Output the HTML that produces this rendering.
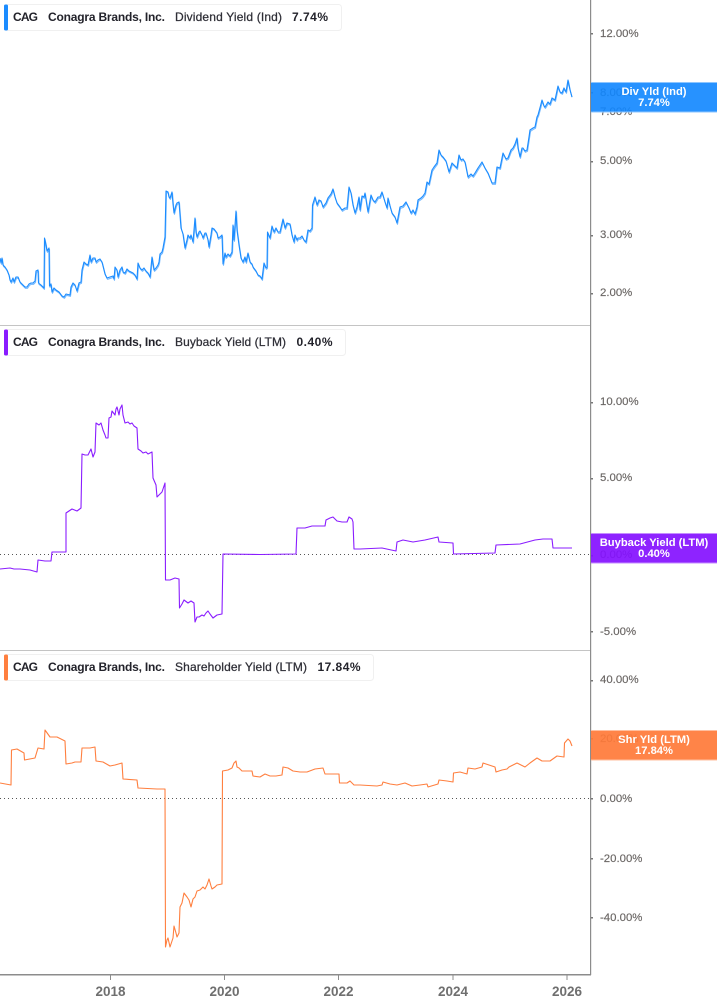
<!DOCTYPE html>
<html lang="en">
<head>
<meta charset="utf-8">
<title>CAG Yield Charts</title>
<style>
html,body{margin:0;padding:0;background:#fff;width:717px;height:1005px;overflow:hidden}
svg{display:block;position:absolute;left:0;top:0}
text{font-family:"Liberation Sans",sans-serif}
.t{font-size:11.4px;fill:#6a6664;stroke:#6a6664;stroke-width:.15}
.x{font-size:13.5px;font-weight:700;fill:#6f6f6f;text-anchor:middle}
.b{font-size:12px;font-weight:700;fill:#23232b}
.r{font-size:12px;fill:#2f2f37;stroke:#2f2f37;stroke-width:.25}
.w{font-size:11.2px;font-weight:700;fill:#fff;text-anchor:middle}
.l{fill:none;stroke-width:1.1;stroke-linejoin:round}
</style>
</head>
<body>
<svg width="717" height="1005" viewBox="0 0 717 1005" xmlns="http://www.w3.org/2000/svg">
<rect width="717" height="1005" fill="#fff"/>

<rect x="0" y="325" width="590" height="1" fill="#c4c4c4"/>
<rect x="0" y="650" width="590" height="1" fill="#c4c4c4"/>
<rect x="590" y="0" width="1.2" height="975" fill="#8c8c8c"/>
<rect x="0" y="974" width="591" height="1.5" fill="#8c8c8c"/>

<line x1="0" x2="590" y1="554.5" y2="554.5" stroke="#555" stroke-width="1" stroke-dasharray="1 3"/>
<line x1="0" x2="590" y1="798.5" y2="798.5" stroke="#555" stroke-width="1" stroke-dasharray="1 3"/>

<!-- chart 1 -->
<polyline class="l" stroke="#1b8cff" stroke-opacity=".6" transform="translate(.5 1.3)" points="0,258 1,263 2,258 3,265 5,267 7,270 9,275 10,280 11,282 13,278 14,282 16,277 18,277 20,282 22,284 25,287 27,287 29,284 31,283 33,283 35,281 36,271 38,270 38.5,283 41,285 43,287 44,288 44.5,238 46,245 47,251 49,248 49.5,286 51,284 52,292 54,288 56,290 59,292 62,296 64,297 66,294 70,295 71,287 73,283 75,285 77,291 79,283 81,282 82,270 84,262 86,264 88,265 90,255 91,262 93,258 95,258 96,262 98,260 100,259 102,262 104,270 105,274 107,278 110,277 113,276 114,279 115,267 117,270 118,277 120,270 122,267 123,272 125,273 127,269 129,271 131,272 133,273 135,275 137,279 138,263 140,268 142,270 144,268 146,271 148,273 150,277 152,257 154,270 156,268 158,265 159,262 160,254 162,252 163,248 165,237 166,191 168,192 169,197 170,198 172,192 173,204 174,213 176,205 177,203 179,202 181,228 183,234 185,248 187,240 188,235 190,238 191,235 193,242 195,218 196,232 197,237 199,232 200,231 202,235 203,238 205,233 206,233 208,240 209,247 211,235 212,228 214,229 217,233 218,238 220,237 222,235 223,264 225,253 226,257 228,254 230,256 232,252 233,225 234,240 236,211 237,230 239,245 241,258 243,262 245,257 246,262 248,253 250,262 252,264 253,267 256,271 258,275 260,276 262,279 264,263 266,268 267,267 267.5,232 270,238 272,226 274,232 276,228 278,232 280,232 283,219 285,228 287,223 290,224 292,235 294,242 295,235 297,240 298,238 300,238 302,236 304,240 306,242 308,230 310,231 312,228 312.5,205 315,197 317,205 319,200 321,201 323,207 326,203 328,198 331,194 333,189 335,197 337,203 340,207 342,210 345,208 347,208 349,187 351,193 353,205 355,213 357,207 359,197 360,210 362,196 364,197 365,193 367,206 368,212 371,195 373,200 375,202 378,197 380,197 382,192 385,202 387,208 388,198 390,206 392,213 395,217 397,223 400,207 403,206 406,202 409,208 411,213 413,210 415,214 417,207 418,200 421,198 423,196 425,193 427,182 429,184 432,170 434,167 437,163 439,150 441,155 443,157 446,161 449,172 452,163 454,165 457,168 459,155 461,160 463,159 465,162 468,177 471,174 473,176 475,173 478,168 480,165 482,162 485,168 488,173 492,183 495,183 497,167 500,168 503,153 506,159 508,158 511,150 513,148 515,144 517,138 518,148 520,157 522,148 523,148 525,151 527,150 529,137 530,130 533,128 535,127 537,117 538,115 541,104 542,100 544,106 545,107 548,102 550,104 552,98 555,100 558,86 560,92 562,93 564,88 566,92 568,80 570,90 571.5,96"/>
<polyline class="l" stroke="#1b8cff" points="0,258 1,263 2,258 3,265 5,267 7,270 9,275 10,280 11,282 13,278 14,282 16,277 18,277 20,282 22,284 25,287 27,287 29,284 31,283 33,283 35,281 36,271 38,270 38.5,283 41,285 43,287 44,288 44.5,238 46,245 47,251 49,248 49.5,286 51,284 52,292 54,288 56,290 59,292 62,296 64,297 66,294 70,295 71,287 73,283 75,285 77,291 79,283 81,282 82,270 84,262 86,264 88,265 90,255 91,262 93,258 95,258 96,262 98,260 100,259 102,262 104,270 105,274 107,278 110,277 113,276 114,279 115,267 117,270 118,277 120,270 122,267 123,272 125,273 127,269 129,271 131,272 133,273 135,275 137,279 138,263 140,268 142,270 144,268 146,271 148,273 150,277 152,257 154,270 156,268 158,265 159,262 160,254 162,252 163,248 165,237 166,191 168,192 169,197 170,198 172,192 173,204 174,213 176,205 177,203 179,202 181,228 183,234 185,248 187,240 188,235 190,238 191,235 193,242 195,218 196,232 197,237 199,232 200,231 202,235 203,238 205,233 206,233 208,240 209,247 211,235 212,228 214,229 217,233 218,238 220,237 222,235 223,264 225,253 226,257 228,254 230,256 232,252 233,225 234,240 236,211 237,230 239,245 241,258 243,262 245,257 246,262 248,253 250,262 252,264 253,267 256,271 258,275 260,276 262,279 264,263 266,268 267,267 267.5,232 270,238 272,226 274,232 276,228 278,232 280,232 283,219 285,228 287,223 290,224 292,235 294,242 295,235 297,240 298,238 300,238 302,236 304,240 306,242 308,230 310,231 312,228 312.5,205 315,197 317,205 319,200 321,201 323,207 326,203 328,198 331,194 333,189 335,197 337,203 340,207 342,210 345,208 347,208 349,187 351,193 353,205 355,213 357,207 359,197 360,210 362,196 364,197 365,193 367,206 368,212 371,195 373,200 375,202 378,197 380,197 382,192 385,202 387,208 388,198 390,206 392,213 395,217 397,223 400,207 403,206 406,202 409,208 411,213 413,210 415,214 417,207 418,200 421,198 423,196 425,193 427,182 429,184 432,170 434,167 437,163 439,150 441,155 443,157 446,161 449,172 452,163 454,165 457,168 459,155 461,160 463,159 465,162 468,177 471,174 473,176 475,173 478,168 480,165 482,162 485,168 488,173 492,183 495,183 497,167 500,168 503,153 506,159 508,158 511,150 513,148 515,144 517,138 518,148 520,157 522,148 523,148 525,151 527,150 529,137 530,130 533,128 535,127 537,117 538,115 541,104 542,100 544,106 545,107 548,102 550,104 552,98 555,100 558,86 560,92 562,93 564,88 566,92 568,80 570,90 572,97"/>

<!-- chart 2 -->
<polyline class="l" stroke="#8a1cff" points="0,569 10,568 14,569 20,569 30,570 37,572 38,560 45,561 51,561 52,552 66,552 66,513 72,509 77,511 81,508 82,454 85,455 88,455 90,451 91,449 93,457 95,452 96,423 99,425 101,423 103,430 105,435 106,438 108,438 109,418 111,417 112,411 115,415 116,409 117,407 119,415 120,409 122,405 123,415 125,423 128,422 130,424 132,423 134,426 137,428 138,449 141,451 143,453 146,452 148,454 152,452 153,478 156,485 157,497 160,494 162,492 165,483 165.5,580 170,580 175,578 179,579 179.5,608 182,604 184,600 188,603 191,601 194,603 195,622 197,617 199,617 202,615 204,616 206,613 208,611 210,614 213,618 217,615 222,614 223,554 260,554.5 296,554 297,528 305,528 312,526 325,526 326,520 330,518 333,517 337,521 342,522 347,522 349,517 352,519 353,522 354,549 360,549 382,548 396,551 397,542 403,540 413,542 425,540 438,537 439,542 453,543 453.5,554 495,553 496,545 520,544 535,540 543,539 552,539 553,548 572,548"/>

<!-- chart 3 -->
<polyline class="l" stroke="#ff7f3f" stroke-width="1" points="0,783 11,785 11.5,750 17,749 24,753 24.5,760 35,758 38,748 44,749 45,730 50,737 57,737 65,741 66,764 72,763 75,762 81,762 82,748 90,748 95,747 96,761 103,762 110,766 115,765 122,763 123,779 137,780 138,788 157,789 165,789 165.5,947 167,940 168,938 170,947 172,941 173,938 174,926 176,933 177,937 179,933 180,907 182,903 184,893 187,897 189,900 191,907 193,899 195,897 197,891 200,890 203,887 205,889 207,885 209,879 211,886 212,889 215,887 217,885 222,884 222.5,771 228,770 232,768 234,763 236,761 237,767 239,768 242,771 248,771 252,771 253,776 260,777 265,774 270,776 276,776 282,775 283,767 288,768 293,771 300,772 307,772 315,769 323,768 325,774 332,774 339,774 339.5,783 347,783 350,781 354,785 360,785 377,786 382,785 383,782 390,784 397,785 405,783 412,786 420,785 427,784 428,787 438,784 439,780 447,781 453,782 453.5,773 460,772 467,774 468,768 475,769 482,767 483,763 489,765 495,767 496,772 502,770 507,769 509,767 517,763 521,765 525,767 530,763 537,758 542,761 550,761 557,756 564,757 564.5,743 568,739 570,741 572,746"/>

<g fill="#777">
<rect x="591" y="33" width="2" height="1.5"/><rect x="591" y="92" width="2" height="1.5"/><rect x="591" y="111" width="2" height="1.5"/><rect x="591" y="161" width="2" height="1.5"/><rect x="591" y="235" width="2" height="1.5"/><rect x="591" y="293" width="2" height="1.5"/>
<rect x="591" y="402" width="2" height="1.5"/><rect x="591" y="478" width="2" height="1.5"/><rect x="591" y="555" width="2" height="1.5"/><rect x="591" y="631" width="2" height="1.5"/>
<rect x="591" y="680" width="2" height="1.5"/><rect x="591" y="738" width="2" height="1.5"/><rect x="591" y="798" width="2" height="1.5"/><rect x="591" y="858" width="2" height="1.5"/><rect x="591" y="917" width="2" height="1.5"/>
</g>

<text class="t" x="600" y="37">12.00%</text>
<text class="t" x="600" y="96">8.00%</text>
<text class="t" x="600" y="115">7.00%</text>
<text class="t" x="600" y="164">5.00%</text>
<text class="t" x="600" y="238">3.00%</text>
<text class="t" x="600" y="296">2.00%</text>
<text class="t" x="600" y="405">10.00%</text>
<text class="t" x="600" y="481">5.00%</text>
<text class="t" x="600" y="558">0.00%</text>
<text class="t" x="600" y="635">-5.00%</text>
<text class="t" x="600" y="683">40.00%</text>
<text class="t" x="600" y="742">20.00%</text>
<text class="t" x="600" y="802">0.00%</text>
<text class="t" x="600" y="862">-20.00%</text>
<text class="t" x="600" y="921">-40.00%</text>

<rect x="591" y="82" width="126" height="30" fill="#0f86ff" fill-opacity=".9"/>
<rect x="591" y="82" width="126" height="1" fill="#8cc5ff"/>
<rect x="591" y="111.5" width="126" height="1" fill="#8cc5ff"/>
<text class="w" x="654" y="95">Div Yld (Ind)</text>
<text class="w" x="654" y="106">7.74%</text>

<rect x="591" y="533" width="126" height="30" fill="#8410ff" fill-opacity=".92"/>
<rect x="591" y="533" width="126" height="1" fill="#c48dff"/>
<rect x="591" y="562.5" width="126" height="1" fill="#c48dff"/>
<text class="w" x="654" y="546">Buyback Yield (LTM)</text>
<text class="w" x="654" y="557">0.40%</text>

<rect x="591" y="730" width="126" height="30" fill="#ff7a38" fill-opacity=".92"/>
<rect x="591" y="730" width="126" height="1" fill="#ffbf9f"/>
<rect x="591" y="759.5" width="126" height="1" fill="#ffbf9f"/>
<text class="w" x="654" y="743">Shr Yld (LTM)</text>
<text class="w" x="654" y="754">17.84%</text>

<g fill="#8c8c8c">
<rect x="110" y="975" width="1" height="5"/><rect x="224" y="975" width="1" height="5"/><rect x="338" y="975" width="1" height="5"/><rect x="452.5" y="975" width="1" height="5"/><rect x="566.5" y="975" width="1" height="5"/>
</g>
<text class="x" x="110.5" y="996">2018</text>
<text class="x" x="224.5" y="996">2020</text>
<text class="x" x="338.5" y="996">2022</text>
<text class="x" x="453" y="996">2024</text>
<text class="x" x="567" y="996">2026</text>

<rect x="4.5" y="4.5" width="337" height="26" rx="3" fill="#fff" stroke="#f0f0f0"/>
<rect x="4" y="4.5" width="4" height="26" rx="1.5" fill="#1b8cff"/>
<text class="b" x="13" y="21" textLength="25">CAG</text>
<text class="b" x="48" y="21" textLength="117">Conagra Brands, Inc.</text>
<text class="r" x="175" y="21" textLength="107">Dividend Yield (Ind)</text>
<text class="b" x="292" y="21" textLength="36">7.74%</text>

<rect x="4.5" y="329.5" width="341" height="26" rx="3" fill="#fff" stroke="#f0f0f0"/>
<rect x="4" y="329.5" width="4" height="26" rx="1.5" fill="#8a1cff"/>
<text class="b" x="13" y="346" textLength="25">CAG</text>
<text class="b" x="48" y="346" textLength="117">Conagra Brands, Inc.</text>
<text class="r" x="175" y="346" textLength="111">Buyback Yield (LTM)</text>
<text class="b" x="296.5" y="346" textLength="36">0.40%</text>

<rect x="4.5" y="654.5" width="369" height="26" rx="3" fill="#fff" stroke="#f0f0f0"/>
<rect x="4" y="654.5" width="4" height="26" rx="1.5" fill="#ff7f3f"/>
<text class="b" x="13" y="671" textLength="25">CAG</text>
<text class="b" x="48" y="671" textLength="117">Conagra Brands, Inc.</text>
<text class="r" x="175" y="671" textLength="132">Shareholder Yield (LTM)</text>
<text class="b" x="317.5" y="671" textLength="43">17.84%</text>
</svg>
</body>
</html>
